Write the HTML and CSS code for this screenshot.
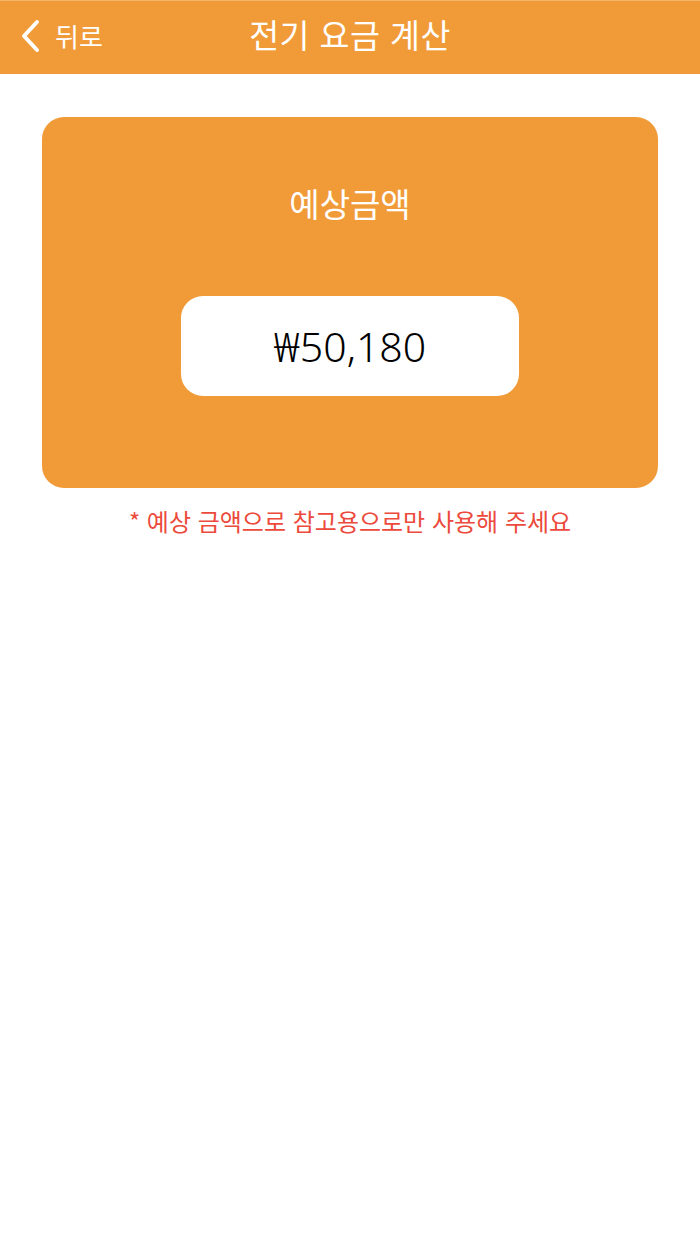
FILE: index.html
```html
<!DOCTYPE html>
<html lang="ko">
<head>
  <meta charset="UTF-8" />
  <meta name="viewport" content="width=device-width, initial-scale=1.0" />
  <title>전기 요금 계산</title>
  <link rel="stylesheet" href="styles.css">
</head>
<body>
  <header class="nav">
    <a class="back" href="#">
      <svg class="chevron" width="22" height="34" viewBox="0 0 22 34">
        <path d="M17 3 L4 17 L17 31" fill="none" stroke="#fff" stroke-width="4" stroke-linecap="round" stroke-linejoin="round"/>
      </svg>
      <span>뒤로</span>
    </a>
    <h1>전기 요금 계산</h1>
  </header>

  <main class="content">
    <div class="card">
      <h2>예상금액</h2>
      <div class="amount">₩50,180</div>
    </div>
    <p class="notice">* 예상 금액으로 참고용으로만 사용해 주세요</p>
  </main>
</body>
</html>
```

FILE: styles.css
```css
body {
  margin: 0;
  background: #fff;
  font-family: "Noto Sans CJK KR", "Noto Sans", sans-serif;
}
.nav {
  position: relative;
  height: 74px;
  background: #f09b38;
  display: flex;
  align-items: center;
  justify-content: center;
  border-top: 1px solid #f4b56b;
  box-sizing: border-box;
  padding-bottom: 9px;
}
.nav h1 {
  margin: 0;
  color: #fff;
  font-size: 32.5px;
  font-weight: 400;
  letter-spacing: 0.5px;
}
.back {
  position: absolute;
  left: 20px;
  top: 18px;
  display: flex;
  align-items: center;
  gap: 13px;
  color: #fff;
  text-decoration: none;
  font-size: 26px;
  line-height: 34px;
}
.content {
  padding: 43px 42px 0 42px;
}
.card {
  background: #f09b38;
  border-radius: 22px;
  height: 371px;
  display: flex;
  flex-direction: column;
  align-items: center;
  box-sizing: border-box;
  padding-top: 64px;
}
.card h2 {
  margin: 0;
  color: #fff;
  font-size: 33px;
  font-weight: 400;
  line-height: 44px;
}
.amount {
  margin-top: 71px;
  width: 338px;
  height: 100px;
  background: #fff;
  border-radius: 22px;
  display: flex;
  align-items: center;
  justify-content: center;
  font-size: 41px;
  color: #000;
  font-family: "Noto Sans", "Noto Sans CJK KR", sans-serif;
  font-weight: 300;
}
.notice {
  margin: 15px 0 0;
  text-align: center;
  color: #ec4a3c;
  font-size: 24px;
}
```
